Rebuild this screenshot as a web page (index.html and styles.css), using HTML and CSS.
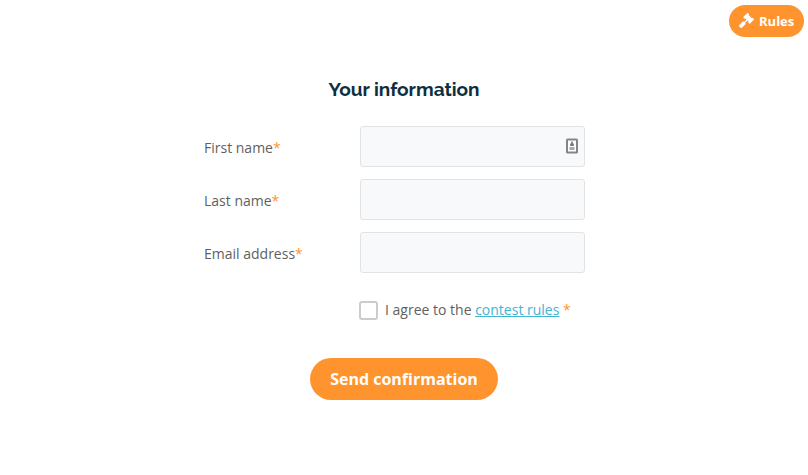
FILE: index.html
```html
<!DOCTYPE html>
<html lang="en">
<head>
  <meta charset="UTF-8">
  <meta name="viewport" content="width=device-width, initial-scale=1.0">
  <title>Your information</title>
  <link rel="stylesheet" href="styles.css">
</head>
<body>
  <header class="top-bar">
    <button class="rules-button" type="button">
      <svg class="gavel" viewBox="0 0 512 512" fill="currentColor">
        <path d="M504.971 199.362l-22.627-22.627c-9.373-9.373-24.569-9.373-33.941 0l-5.657 5.657L329.608 69.255l5.657-5.657c9.373-9.373 9.373-24.569 0-33.941L312.638 7.029c-9.373-9.373-24.569-9.373-33.941 0L154.246 131.48c-9.373 9.373-9.373 24.569 0 33.941l22.627 22.627c9.373 9.373 24.569 9.373 33.941 0l5.657-5.657 39.598 39.598-81.04 81.04-5.657-5.657c-12.497-12.497-32.758-12.497-45.255 0L9.373 412.118c-12.497 12.497-12.497 32.758 0 45.255l45.255 45.255c12.497 12.497 32.758 12.497 45.255 0l114.745-114.745c12.497-12.497 12.497-32.758 0-45.255l-5.657-5.657 81.04-81.04 39.598 39.598-5.657 5.657c-9.373 9.373-9.373 24.569 0 33.941l22.627 22.627c9.373 9.373 24.569 9.373 33.941 0l124.451-124.451c9.372-9.372 9.372-24.568 0-33.941z"/>
      </svg>
      <span>Rules</span>
    </button>
  </header>

  <form class="info-form">
    <h1>Your information</h1>

    <div class="row">
      <label for="first-name">First name<span class="required">*</span></label>
      <div class="field">
        <input type="text" id="first-name">
        <svg class="autofill" viewBox="0 0 12 16">
          <rect x="1" y="1.5" width="10" height="13" rx=".5" fill="#fff" stroke="#858585" stroke-width="2"/>
          <path fill="#777" d="M5.2 3.5h1.6v2h1V8H4.2V5.500h1z"/>
          <path fill="#aaa" d="M3.500 9h5v3h-5z"/>
        </svg>
      </div>
    </div>
    <div class="row">
      <label for="last-name">Last name<span class="required">*</span></label>
      <div class="field">
        <input type="text" id="last-name">
      </div>
    </div>
    <div class="row">
      <label for="email">Email address<span class="required">*</span></label>
      <div class="field">
        <input type="email" id="email">
      </div>
    </div>

    <div class="agree">
      <input type="checkbox" id="agree">
      <label for="agree">I agree to the <a href="#">contest rules</a> <span class="required">*</span></label>
    </div>

    <button class="submit-button" type="button">Send confirmation</button>
  </form>
</body>
</html>
```
FILE: styles.css
```css
* { box-sizing: border-box; }
body {
  margin: 0;
  background-color: #fff;
  color: #5f5f5f;
  font-family: "Open Sans", sans-serif;
  font-size: 14px;
  line-height: 20px;
}
.top-bar {
  display: flex;
  justify-content: flex-end;
  padding: 5px 4px 0 0;
}
button {
  border: none;
  background-color: #ff942e;
  color: #fff;
  font-family: inherit;
  font-weight: 700;
  cursor: pointer;
}
.rules-button {
  display: flex;
  align-items: center;
  gap: 5px;
  width: 75px;
  height: 32px;
  padding: 0 0 0 10px;
  border-radius: 16px;
  font-size: 13px;
}
.gavel {
  width: 15px;
  height: 15px;
  margin-top: -2px;
}
.info-form {
  display: flex;
  flex-direction: column;
  width: 400px;
  margin: 0 auto;
  padding-top: 39px;
}
h1 {
  margin: 0 0 23px;
  color: #0e2f40;
  font-family: Raleway, Lato, sans-serif;
  font-size: 19px;
  font-weight: 700;
  line-height: 27px;
  text-align: center;
}
.row {
  display: flex;
  align-items: center;
  height: 41px;
  margin-bottom: 12px;
}
.row label {
  width: 156px;
  padding-top: 2px;
}
.field {
  position: relative;
  width: 225px;
}
.field input {
  display: block;
  width: 100%;
  height: 41px;
  padding: 0 12px;
  border: 1px solid #e1e3e5;
  border-radius: 3px;
  background-color: #f8f9fb;
  font: inherit;
}
/* autofill badge at the right end of the field */
.autofill {
  position: absolute;
  top: 12px;
  right: 7px;
  width: 12px;
  height: 16px;
}
.required { color: #ff942e; }
.agree {
  display: flex;
  align-items: center;
  gap: 7px;
  margin: 15px 0 0 155px;
}
.agree input {
  appearance: none;
  width: 19px;
  height: 19px;
  margin: 0;
  border: 2px solid #ccc;
  border-radius: 3px;
  background-color: #fff;
}
.agree a { color: #42b4d4; }
.submit-button {
  align-self: center;
  width: 188px;
  height: 42px;
  margin-top: 38px;
  padding: 0;
  border-radius: 21px;
  font-size: 16px;
}
```
